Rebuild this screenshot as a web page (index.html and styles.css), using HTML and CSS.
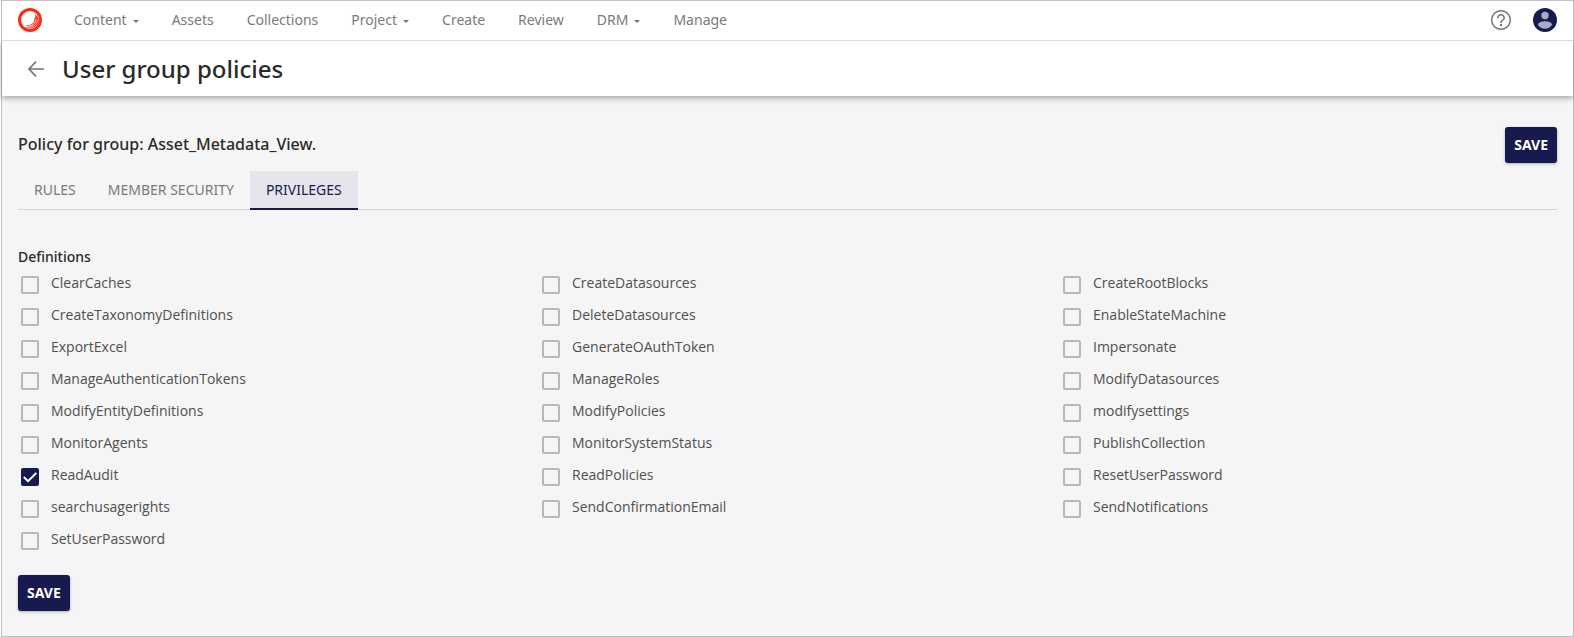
FILE: index.html
```html
<!DOCTYPE html>
<html lang="en">
<head>
<meta charset="utf-8">
<title>User group policies</title>
<link rel="stylesheet" href="styles.css">
</head>
<body>
<div class="app">
  <header class="topbar">
    <a class="logo" href="#" aria-label="Home">
      <svg viewBox="0 0 24 24" width="24" height="24">
        <circle cx="12" cy="12" r="12" fill="#ff2a13"/>
        <circle cx="12" cy="12" r="9" fill="#fff"/>
        <path d="M17 6.500C20 8 21 11 20.500 14C19 19.500 12.500 22 7 19C12 19.500 19 16 17 6.500z" fill="#ff2a13"/>
        <path d="M16.500 10C17.500 14.500 13 18.500 8 17.500" fill="none" stroke="#ff2a13" stroke-width=".8"/>
        <path d="M19.500 11.500C19.500 16.500 14.500 20.300 9 19.200M18 11C18.500 15.500 14 19.200 8 18.400" fill="none" stroke="#fff" stroke-width=".6"/>
      </svg>
    </a>
    <nav class="menu">
      <a class="menu-item has-caret" href="#">Content</a>
      <a class="menu-item" href="#">Assets</a>
      <a class="menu-item" href="#">Collections</a>
      <a class="menu-item has-caret" href="#">Project</a>
      <a class="menu-item" href="#">Create</a>
      <a class="menu-item" href="#">Review</a>
      <a class="menu-item has-caret" href="#">DRM</a>
      <a class="menu-item" href="#">Manage</a>
    </nav>
    <button class="icon-button" type="button" aria-label="Help">
      <svg viewBox="0 0 24 24" width="24" height="24" fill="#757575"><path d="M11 18h2v-2h-2v2zm1-16C6.480 2 2 6.480 2 12s4.480 10 10 10 10-4.480 10-10S17.520 2 12 2zm0 18.500c-4.700 0-8.500-3.800-8.500-8.500s3.800-8.500 8.500-8.500 8.500 3.800 8.500 8.500-3.800 8.500-8.500 8.500zm0-14.500c-2.210 0-4 1.790-4 4h1.600c0-1.300 1.100-2.400 2.400-2.400s2.400 1.100 2.400 2.400c0 2-3.200 1.750-3.200 5h1.600c0-2.250 3.200-2.500 3.200-5 0-2.210-1.790-4-4-4z"/></svg>
    </button>
    <button class="icon-button" type="button" aria-label="Account">
      <svg viewBox="0 0 24 24" width="24" height="24"><circle cx="12" cy="12" r="12" fill="#171a4f"/><circle cx="12" cy="7.500" r="3.700" fill="#a9abc2"/><path d="M4.800 16.500C6.500 12.200 17.500 12.200 19.200 16.500C16.500 22.200 7.500 22.200 4.800 16.500z" fill="#a9abc2"/></svg>
    </button>
  </header>
  <div class="titlebar">
    <button class="icon-button" type="button" aria-label="Back">
      <svg viewBox="0 0 24 24" width="24" height="24" fill="none" stroke="#757575" stroke-width="1.700"><path d="M20 12H5.500M12 4.700L5 12l7 7.300"/></svg>
    </button>
    <h1 class="title">User group policies</h1>
  </div>
  <main class="content">
    <div class="policy-head">
      <h2 class="policy-name">Policy for group: Asset_Metadata_View.</h2>
      <button class="save" type="button">SAVE</button>
    </div>
    <div class="tabs" role="tablist">
      <button class="tab" type="button" role="tab">RULES</button>
      <button class="tab" type="button" role="tab">MEMBER SECURITY</button>
      <button class="tab active" type="button" role="tab" aria-selected="true">PRIVILEGES</button>
    </div>
    <fieldset class="definitions">
      <legend class="legend">Definitions</legend>
      <div class="grid">
        <label class="option"><input class="box" type="checkbox"><span class="name">ClearCaches</span></label>
        <label class="option"><input class="box" type="checkbox"><span class="name">CreateDatasources</span></label>
        <label class="option"><input class="box" type="checkbox"><span class="name">CreateRootBlocks</span></label>
        <label class="option"><input class="box" type="checkbox"><span class="name">CreateTaxonomyDefinitions</span></label>
        <label class="option"><input class="box" type="checkbox"><span class="name">DeleteDatasources</span></label>
        <label class="option"><input class="box" type="checkbox"><span class="name">EnableStateMachine</span></label>
        <label class="option"><input class="box" type="checkbox"><span class="name">ExportExcel</span></label>
        <label class="option"><input class="box" type="checkbox"><span class="name">GenerateOAuthToken</span></label>
        <label class="option"><input class="box" type="checkbox"><span class="name">Impersonate</span></label>
        <label class="option"><input class="box" type="checkbox"><span class="name">ManageAuthenticationTokens</span></label>
        <label class="option"><input class="box" type="checkbox"><span class="name">ManageRoles</span></label>
        <label class="option"><input class="box" type="checkbox"><span class="name">ModifyDatasources</span></label>
        <label class="option"><input class="box" type="checkbox"><span class="name">ModifyEntityDefinitions</span></label>
        <label class="option"><input class="box" type="checkbox"><span class="name">ModifyPolicies</span></label>
        <label class="option"><input class="box" type="checkbox"><span class="name">modifysettings</span></label>
        <label class="option"><input class="box" type="checkbox"><span class="name">MonitorAgents</span></label>
        <label class="option"><input class="box" type="checkbox"><span class="name">MonitorSystemStatus</span></label>
        <label class="option"><input class="box" type="checkbox"><span class="name">PublishCollection</span></label>
        <label class="option"><input class="box" type="checkbox" checked><span class="name">ReadAudit</span></label>
        <label class="option"><input class="box" type="checkbox"><span class="name">ReadPolicies</span></label>
        <label class="option"><input class="box" type="checkbox"><span class="name">ResetUserPassword</span></label>
        <label class="option"><input class="box" type="checkbox"><span class="name">searchusagerights</span></label>
        <label class="option"><input class="box" type="checkbox"><span class="name">SendConfirmationEmail</span></label>
        <label class="option"><input class="box" type="checkbox"><span class="name">SendNotifications</span></label>
        <label class="option"><input class="box" type="checkbox"><span class="name">SetUserPassword</span></label>
      </div>
    </fieldset>
    <button class="save" type="button">SAVE</button>
  </main>
</div>
</body>
</html>
```
FILE: styles.css
```css
* { box-sizing: border-box; }

body {
  margin: 0;
  background: #fff;
  color: #2a2a2a;
  font-family: "Noto Sans", "Open Sans", sans-serif;
  font-size: 14px;
  line-height: 20px;
}

button {
  margin: 0;
  border: 0;
  background: none;
  font: inherit;
  cursor: pointer;
}

svg { display: block; }

.app {
  display: flex;
  flex-direction: column;
  min-height: 100vh;
  margin-left: 1px;
  border: 1px solid #c1c1c1;
  background: #f5f5f5;
}

.topbar {
  position: relative;
  z-index: 1;
  display: flex;
  align-items: center;
  gap: 20px;
  height: 40px;
  padding: 0 16px 1px;
  border-bottom: 1px solid #dcdcdc;
  background: #fff;
}

.menu {
  display: flex;
  flex: 1;
  gap: 33px;
  padding-left: 12px;
}

.menu-item {
  display: flex;
  align-items: center;
  gap: 6px;
  color: #7a7a7a;
  text-decoration: none;
}

.has-caret::after {
  content: "";
  margin-top: 3px;
  border: 3px solid transparent;
  border-top-color: #757575;
  border-bottom: 0;
}

.icon-button { padding: 0; }

.titlebar {
  display: flex;
  align-items: center;
  gap: 14px;
  height: 55px;
  padding: 0 22px;
  background: #fff;
  box-shadow: 0 2px 6px rgba(0, 0, 0, .35);
}

.title {
  margin: 0;
  font-size: 24px;
  font-weight: 500;
  line-height: 32px;
}

.content {
  flex: 1;
  padding: 31px 16px 24px;
}

.policy-head {
  display: flex;
  align-items: center;
  justify-content: space-between;
}

.policy-name {
  margin: 0;
  padding-bottom: 2px;
  font-size: 16px;
  font-weight: 500;
}

.save {
  height: 36px;
  padding: 0 9px;
  border-radius: 3px;
  background: #171a4f;
  box-shadow: 0 1px 3px rgba(0, 0, 0, .3);
  color: #fff;
  font-weight: 700;
}

.tabs {
  display: flex;
  margin-top: 8px;
  border-bottom: 1px solid #d4d4d4;
}

.tab {
  height: 39px;
  margin-bottom: -1px;
  padding: 0 16px;
  border-bottom: 2px solid transparent;
  color: #7a7a7a;
}

.tab.active {
  border-bottom-color: #171a4f;
  background: #e5e5eb;
  color: #171a4f;
}

.definitions {
  margin: 37px 0 20px;
  padding: 0;
  border: 0;
}

.legend {
  padding: 0;
  font-weight: 500;
}

.grid {
  display: grid;
  grid-template-columns: repeat(3, 1fr);
  column-gap: 24px;
}

.option {
  display: flex;
  align-items: flex-start;
  gap: 12px;
  height: 32px;
  padding: 6px 3px 0;
}

.box {
  flex: none;
  width: 18px;
  height: 18px;
  margin: 3px 0 0;
  border: 2px solid #b8b8b8;
  border-radius: 2px;
  appearance: none;
}

.box:checked {
  border-color: #171a4f;
  background: #171a4f url("data:image/svg+xml,%3Csvg xmlns='http://www.w3.org/2000/svg' viewBox='0 0 14 14'%3E%3Cpath d='M0.800 7l4.200 4.200L13.300 3' fill='none' stroke='white' stroke-width='2'/%3E%3C/svg%3E") center / 14px no-repeat;
}

.name {
  color: #505050;
  font-family: "Open Sans", "Noto Sans", sans-serif;
}
```
